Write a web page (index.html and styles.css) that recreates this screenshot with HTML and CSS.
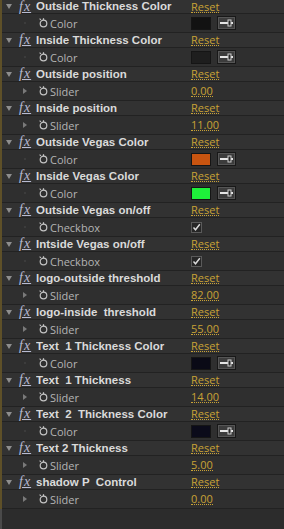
FILE: index.html
```html
<!DOCTYPE html>
<html lang="en">
<head>
  <meta charset="UTF-8" />
  <title>Effect Controls</title>
  <link rel="stylesheet" href="styles.css">
</head>
<body>
  <div class="panel">
    <div class="list" id="list"></div>
    <div class="rest"></div>
  </div>

  <script>
    const effects = [
      { name: "Outside Thickness Color", type: "Color", color: "#121212" },
      { name: "Inside Thickness Color", type: "Color", color: "#1e1e1e" },
      { name: "Outside position", type: "Slider", value: "0.00" },
      { name: "Inside position", type: "Slider", value: "11.00" },
      { name: "Outside Vegas Color", type: "Color", color: "#c85410" },
      { name: "Inside Vegas Color", type: "Color", color: "#1ef03a" },
      { name: "Outside Vegas on/off", type: "Checkbox" },
      { name: "Intside Vegas on/off", type: "Checkbox" },
      { name: "logo-outside threshold", type: "Slider", value: "82.00" },
      { name: "logo-inside  threshold", type: "Slider", value: "55.00" },
      { name: "Text  1 Thickness Color", type: "Color", color: "#0a0a16" },
      { name: "Text  1 Thickness", type: "Slider", value: "14.00" },
      { name: "Text  2  Thickness Color", type: "Color", color: "#0b0b1a" },
      { name: "Text 2 Thickness", type: "Slider", value: "5.00" },
      { name: "shadow P  Control", type: "Slider", value: "0.00" }
    ];

    const stopwatch = `<svg class="watch" width="11" height="11" viewBox="0 0 11 11">
      <circle cx="5.5" cy="6.5" r="3.3" fill="none" stroke="#c4c4c4" stroke-width="1.2"/>
      <path d="M5.5 1.2v2" stroke="#c4c4c4" stroke-width="1.2"/>
      <path d="M1.6 1.6l1.3 1.3" stroke="#c4c4c4" stroke-width="1.1"/>
    </svg>`;

    const picker = `<span class="picker"><svg width="17" height="12" viewBox="0 0 17 12">
      <rect x="2" y="5" width="13" height="2" fill="#e6e6e6"/>
      <rect x="10" y="3" width="3" height="6" fill="#2a2a2a" stroke="#d0d0d0" stroke-width="1"/>
    </svg></span>`;

    function control(e) {
      if (e.type === "Color") {
        return `<span class="swatch" style="background:${e.color}"></span>${picker}`;
      }
      if (e.type === "Checkbox") {
        return `<span class="check"><svg width="9" height="9" viewBox="0 0 9 9"><path d="M1.5 4.5l2 2.3L7.8 1.2" fill="none" stroke="#dcdcdc" stroke-width="1.4"/></svg></span>`;
      }
      return `<span class="link">${e.value}</span>`;
    }

    document.getElementById("list").innerHTML = effects.map(e => `
      <div class="row fx-row">
        <span class="twirl"><i class="down"></i></span>
        <span class="fx">fx</span>
        <span class="name">${e.name}</span>
        <span class="link">Reset</span>
      </div>
      <div class="row prop-row">
        <span class="arrow">${e.type === "Slider" ? '<i class="right"></i>' : '<i class="dot"></i>'}</span>
        ${stopwatch}
        <span class="label">${e.type}</span>
        <span class="ctrl">${control(e)}</span>
      </div>`).join("");
  </script>
</body>
</html>
```

FILE: styles.css
```css
body {
  margin: 0;
  background-color: #2c2c2c;
  font-family: 'Open Sans', sans-serif;
  font-size: 11px;
  overflow: hidden;
}
.panel {
  height: 529px;
  display: flex;
  flex-direction: column;
}
.list {
  border-left: 2px solid #5e5028;
}
.rest {
  flex: 1;
  border-left: 2px solid #4a4a4a;
}
.row {
  display: flex;
  align-items: center;
  background-color: #323232;
  border-bottom: 1px solid #222222;
  box-sizing: border-box;
}
.fx-row {
  height: 15px;
}
.fx-row:first-child {
  height: 14px;
}
.prop-row {
  height: 19px;
  background-color: #2f2f2f;
}
.twirl {
  width: 13px;
  margin-left: 4px;
  display: flex;
  align-items: center;
}
.down {
  display: block;
  width: 0;
  height: 0;
  border-left: 3px solid transparent;
  border-right: 3px solid transparent;
  border-top: 5px solid #8e8e8e;
}
.fx {
  width: 17px;
  font-family: 'Liberation Serif', serif;
  font-style: italic;
  font-size: 14px;
  letter-spacing: 1px;
  color: #b8bbd2;
  text-decoration: underline;
  line-height: 12px;
}
.name {
  width: 155px;
  font-family: 'Liberation Sans', sans-serif;
  font-size: 11.5px;
  font-weight: bold;
  color: #dadada;
  white-space: pre;
  overflow: hidden;
  line-height: 13px;
}
.link {
  color: #c8a236;
  border-bottom: 1px dotted #c8a236;
  line-height: 11px;
}
.arrow {
  width: 14px;
  margin-left: 21px;
  display: flex;
  align-items: center;
}
.right {
  display: block;
  width: 0;
  height: 0;
  border-top: 3px solid transparent;
  border-bottom: 3px solid transparent;
  border-left: 4px solid #7a7a7a;
}
.dot {
  display: block;
  width: 2px;
  height: 2px;
  margin-left: 1px;
  background-color: #3c3c3c;
}
.watch {
  width: 13px;
  margin-top: -2px;
}
.label {
  width: 141px;
  color: #b4b4b4;
}
.ctrl {
  display: flex;
  align-items: center;
  gap: 6px;
}
.swatch {
  width: 18px;
  height: 11px;
  border: 1px solid #151515;
}
.picker {
  width: 17px;
  height: 12px;
  display: flex;
  align-items: center;
  justify-content: center;
  background-color: #3c3c3c;
  border: 1px solid #181818;
  box-shadow: inset 0 0 0 1px #555555;
}
.check {
  width: 9px;
  height: 9px;
  display: flex;
  background-color: #262626;
  border: 1px solid #5a5a5a;
}
```
